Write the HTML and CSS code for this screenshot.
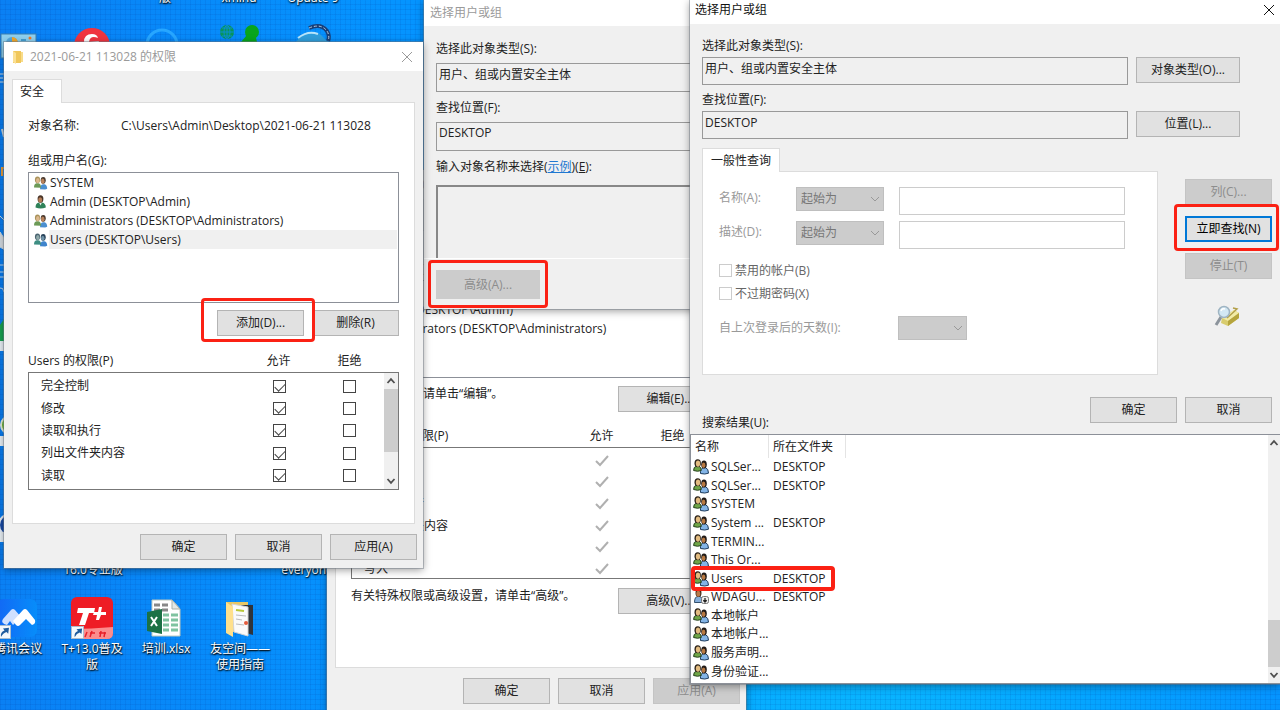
FILE: index.html
```
<!DOCTYPE html>
<html lang="zh-CN">
<head>
<meta charset="utf-8">
<title>选择用户或组</title>
<link rel="stylesheet" href="styles.css">
</head>
<body>
<svg class="defs" width="0" height="0" aria-hidden="true">
  <defs>
    <symbol id="group" viewBox="0 0 14 14">
      <path d="M6.500 13.200q0-4.500 3-5h1.500q2.600.8 2.700 4.500l-2 .8z" fill="#4b8fd0"/>
      <ellipse cx="9.700" cy="4.300" rx="2.500" ry="3.400" fill="#47372c"/>
      <ellipse cx="9.300" cy="5.200" rx="1.800" ry="2.600" fill="#b9835c"/>
      <path d="M.5 11.500q0-3.800 2.500-4.300h2q2.600.6 2.600 4.600z" fill="#6c9a57"/>
      <ellipse cx="4" cy="3.800" rx="2.600" ry="3.400" fill="#a9925a"/>
      <ellipse cx="4.300" cy="4.600" rx="1.800" ry="2.600" fill="#dcb98f"/>
    </symbol>
    <symbol id="users" viewBox="0 0 14 14">
      <path d="M6.500 13.200q0-4.500 3-5h1.500q2.600.8 2.700 4.500l-2 .8z" fill="#3f84cc"/>
      <ellipse cx="9.700" cy="4.300" rx="2.500" ry="3.400" fill="#28435a"/>
      <ellipse cx="9.300" cy="5.200" rx="1.700" ry="2.500" fill="#7093a8"/>
      <path d="M.5 11.500q0-3.800 2.500-4.300h2q2.600.6 2.600 4.600z" fill="#3e8e83"/>
      <ellipse cx="4" cy="3.800" rx="2.600" ry="3.400" fill="#4b6571"/>
      <ellipse cx="4.300" cy="4.600" rx="1.700" ry="2.500" fill="#8fa9a9"/>
    </symbol>
    <symbol id="person" viewBox="0 0 14 14">
      <path d="M2 12.500q0-4.500 3.500-5h3q3.800.8 3.800 5-5 1.800-10.300 0z" fill="#2f8259"/>
      <path d="M5.500 7.500l1.500 3 1.500-3z" fill="#e8eee9"/>
      <ellipse cx="7" cy="4" rx="2.900" ry="3.700" fill="#4a3529"/>
      <ellipse cx="6.700" cy="4.900" rx="2" ry="2.700" fill="#b77e58"/>
    </symbol>
    <symbol id="people" viewBox="0 0 16 16">
      <path d="M7.500 14.500q-.5-5 3-5.800h2q3 1 3 5.500-3.500 1.500-8 .3z" fill="#83b4e6" stroke="#1f3d5e"/>
      <ellipse cx="11" cy="5.500" rx="2.800" ry="4" fill="#201a17"/>
      <ellipse cx="10.600" cy="6.300" rx="1.800" ry="2.800" fill="#b87942"/>
      <path d="M.6 11.500q0-3.800 2.800-4.300h2.500q2.500.8 2.300 4.300-3.500 1.500-7.600 0z" fill="#6fa547" stroke="#24401d"/>
      <ellipse cx="4.700" cy="4.200" rx="3.200" ry="4" fill="#2b2218"/>
      <ellipse cx="5" cy="4.600" rx="2.200" ry="3.100" fill="#e2bb80"/>
    </symbol>
    <symbol id="account" viewBox="0 0 16 16">
      <path d="M1.500 13.500q0-6 3.500-6h2q3.500 1 3 6z" fill="#86aedb" stroke="#34516f"/>
      <ellipse cx="5.500" cy="4" rx="3" ry="3.900" fill="#3b281b"/>
      <ellipse cx="5.300" cy="4.800" rx="2" ry="3" fill="#b97a4b"/>
      <rect x="8.500" y="7.500" width="7" height="7" rx="2" fill="#eee" stroke="#777"/>
      <path d="M12 9v4M10.300 11.300L12 13l1.700-1.700" fill="none" stroke="#222" stroke-width="1.300"/>
    </symbol>
    <symbol id="up" viewBox="0 0 10 10"><path d="M1.500 7L5 3.200 8.500 7" fill="none" stroke="#505050" stroke-width="1.800"/></symbol>
    <symbol id="down" viewBox="0 0 10 10"><path d="M1.500 3L5 6.800 8.500 3" fill="none" stroke="#505050" stroke-width="1.800"/></symbol>
    <symbol id="close" viewBox="0 0 12 12"><path d="M1 1l10 10M11 1L1 11" fill="none" stroke="currentColor"/></symbol>
    <symbol id="shortcut" viewBox="0 0 14 14">
      <rect x=".5" y=".5" width="13" height="13" fill="#f4f8fc" stroke="#a8bccd"/>
      <path d="M4 12q-1-5 3.500-6.500L6 3.500l6-.8-.8 6-1.700-1.700Q6 8 4 12z" fill="#1f5c9e"/>
    </symbol>
  </defs>
</svg>

<main class="desktop">
  <svg class="backdrop-icons" width="423" height="570" aria-hidden="true">
    <rect x="1" y="34" width="35" height="24" fill="#8fd0ee" stroke="#3c7fae"/>
    <circle cx="12" cy="43" r="6" fill="#58a9dc"/><path d="M12 43v-6a6 6 0 0 1 6 6z" fill="#f3a92b"/>
    <circle cx="30" cy="38" r="1.500" fill="#f07b27"/><path d="M21 40h5" stroke="#459fd2" stroke-width="2"/>
    <circle cx="92" cy="46" r="18" fill="#f03440"/>
    <path d="M84 42q0-8 8-8 5 0 6 4-8-3-9 4l10-1q-1 4-6 4h-9z" fill="#fff"/>
    <circle cx="162" cy="45" r="15" fill="none" stroke="#27a6ff" stroke-width="3"/>
    <circle cx="227" cy="32" r="7" fill="#07955b"/>
    <g fill="none" stroke="#0a8fd0" stroke-width="1"><ellipse cx="227" cy="32" rx="3" ry="6.500"/><path d="M220 32h14M222 28h10M222 36h10M227 25v14"/></g>
    <circle cx="252" cy="32" r="7" fill="#08a51c"/><path d="M247 35l-6 7h16l-2-8z" fill="#08a51c"/>
    <path d="M296 42q8-12 24-8l8 8z" fill="#2f9edb"/><path d="M298 38q10-8 20-4" fill="none" stroke="#b6e4fa" stroke-width="2"/>
    <path d="M309 28q12-5 18 3 3 5 1 10" fill="none" stroke="#183f78" stroke-width="4"/><path d="M309 28q12-5 18 3 3 5 1 10" fill="none" stroke="#b7cce0" stroke-width="1" stroke-dasharray="3 2"/>
    <path d="M0 74h4M0 78h3M0 82h4" stroke="#c9d5df" fill="none"/>
    <path d="M2 129l2 8" stroke="#c9d5df" stroke-width="2" fill="none"/>
    <path d="M0 216l4 4M0 232l4 6 1 12-5-3z" stroke="#c9d5df" fill="#d8dde2"/>
    <path d="M2 176v-8h2" stroke="#e49b3c" stroke-width="2" fill="none"/>
    <path d="M0 265h4M0 272h4M0 277h4M0 288q3-1 4 4" stroke="#b8d4ef" fill="none"/>
    <path d="M0 325l4-6v22H0z" fill="#17a251"/><path d="M0 341h4v10H0z" fill="#eaf1f7"/>
    <circle cx="10" cy="425" r="9" fill="#69b92d" stroke="#e4eddf" stroke-width="2"/><path d="M0 436h4v10H0z" fill="#eaf1f7"/>
    <circle cx="10" cy="525" r="11" fill="#174aa6" stroke="#e5edf8" stroke-width="2"/><path d="M0 532h4v10H0z" fill="#eaf1f7"/>
  </svg>
  <span class="caption cap-a">版</span>
  <span class="caption cap-b">xmind</span>
  <span class="caption cap-c">Update 9</span>
  <span class="caption cap-d">16.0专业版</span>
  <span class="caption cap-e">everyone</span>

  <div class="shortcuts">
    <a class="shortcut" href="#meeting">
      <svg width="42" height="42" viewBox="0 0 42 42"><defs><linearGradient id="mt" x2="1"><stop stop-color="#1268f5"/><stop offset="1" stop-color="#078dfa"/></linearGradient></defs><rect x="0" y="2" width="40" height="38" rx="7" fill="url(#mt)"/><path d="M6 22l8-9q2-2 4 0l6 7-8 8-3-4-3 4q-7-2-4-6z" fill="#cfe0ff"/><path d="M16 24l10-11q2-2 4 0l8 10q1 4-3 5l-6-6-6 6q-2 2-4 0z" fill="#fff"/><use href="#shortcut" x="0" y="28" width="14" height="14"/></svg>
      <span>腾讯会议</span>
    </a>
    <a class="shortcut" href="#tplus">
      <svg width="42" height="42" viewBox="0 0 42 42"><rect width="42" height="42" rx="6" fill="#ee1c25"/><path d="M0 32q20 0 42-2v6q0 6-6 6H0z" fill="#fb8d8d"/><path d="M7 11h17l-1 5h-5l-4 12H8l4-12H6z" fill="#fff"/><path d="M28 10h3l-1 5h5v3h-5l-2 5h-3l1-5h-4l1-3h4z" fill="#fff"/><path d="M16 35l-2 5M19 36h5M21 34l-2 6M28 36h7M30 34l-1 6M34 35l-1 5" stroke="#e8202a" stroke-width="1.500"/><use href="#shortcut" x="0" y="29" width="13" height="13"/></svg>
      <span>T+13.0普及版</span>
    </a>
    <a class="shortcut" href="#training">
      <svg width="42" height="42" viewBox="0 0 42 42"><path d="M7 3h20l8 9v27H7z" fill="#fff" stroke="#bcc9c0"/><path d="M27 3v9h8z" fill="#e3e8e4" stroke="#a6b1a9"/><path d="M9 8h6M17 8h6M9 13h6M17 13h6" stroke="#888" stroke-width="3"/><path d="M18 18h6M26 18h7M18 23h6M26 23h7M18 28h6M26 28h7M18 33h6M26 33h7" stroke="#7fc3a0" stroke-width="3"/><path d="M2 15l15-3v25L2 34z" fill="#1c7145"/><path d="M6 20l6 9M12 20l-6 9" stroke="#fff" stroke-width="2"/></svg>
      <span>培训.xlsx</span>
    </a>
    <a class="shortcut" href="#guide">
      <svg width="42" height="42" viewBox="0 0 42 42"><path d="M7 5h22v30H7z" fill="#e9c765"/><path d="M22 8h12v30l-10-3z" fill="#30343a"/><path d="M13 7l16 3v29l-14-4z" fill="#fafafa" stroke="#d4d4d4"/><path d="M17 13l8 1" stroke="#b9c738" stroke-width="2"/><path d="M17 18l10 1M17 22l6 1M17 27l8 1" stroke="#bbb"/><circle cx="27" cy="26" r="2" fill="#e35b3c"/><path d="M7 5l7 5v30l-7-4z" fill="#ffe08c"/></svg>
      <span>友空间——使用指南</span>
    </a>
  </div>

  <section class="window props" aria-label="属性">
    <header class="title inactive"><span>2021-06-21 113028 属性</span></header>
    <div class="sheet">
      <div class="tabs"><button class="tab" type="button">安全</button></div>
      <div class="panel">
        <p class="object"><span>对象名称:</span><span>C:\Users\Admin\Desktop</span></p>
        <p class="group-label">组或用户名(G):</p>
        <ul class="principals">
          <li><svg><use href="#group"/></svg><span>SYSTEM</span></li>
          <li><svg><use href="#person"/></svg><span>Admin (DESKTOP\Admin)</span></li>
          <li><svg><use href="#group"/></svg><span>Administrators (DESKTOP\Administrators)</span></li>
        </ul>
        <div class="hint edit"><span>要更改权限，请单击“编辑”。</span><button class="btn big" type="button">编辑(E)...</button></div>
        <div class="perm-head"><span>SYSTEM 的权限(P)</span><span>允许</span><span>拒绝</span></div>
        <div class="perm-box tall">
          <table class="perms">
            <tr><td>完全控制</td><td><svg class="tick" viewBox="0 0 14 12"><path d="M1 6l4 4 8-9"/></svg></td><td></td></tr>
            <tr><td>修改</td><td><svg class="tick" viewBox="0 0 14 12"><path d="M1 6l4 4 8-9"/></svg></td><td></td></tr>
            <tr><td>读取和执行</td><td><svg class="tick" viewBox="0 0 14 12"><path d="M1 6l4 4 8-9"/></svg></td><td></td></tr>
            <tr><td>列出文件夹内容</td><td><svg class="tick" viewBox="0 0 14 12"><path d="M1 6l4 4 8-9"/></svg></td><td></td></tr>
            <tr><td>读取</td><td><svg class="tick" viewBox="0 0 14 12"><path d="M1 6l4 4 8-9"/></svg></td><td></td></tr>
            <tr><td>写入</td><td><svg class="tick" viewBox="0 0 14 12"><path d="M1 6l4 4 8-9"/></svg></td><td></td></tr>
          </table>
        </div>
        <div class="hint advanced"><span>有关特殊权限或高级设置，请单击“高级”。</span><button class="btn big" type="button">高级(V)...</button></div>
      </div>
      <footer class="actions"><button class="btn" type="button">确定</button><button class="btn" type="button">取消</button><button class="btn" type="button" disabled>应用(A)</button></footer>
    </div>
  </section>

  <section class="window picker" aria-label="选择用户或组">
    <header class="title inactive"><span>选择用户或组</span></header>
    <div class="picker-body">
      <label for="p-type">选择此对象类型(S):</label>
      <input id="p-type" class="readout" readonly value="用户、组或内置安全主体">
      <label for="p-loc">查找位置(F):</label>
      <input id="p-loc" class="readout" readonly value="DESKTOP">
      <label for="p-names">输入对象名称来选择(<a href="#examples">示例</a>)(<u>E</u>):</label>
      <textarea id="p-names" class="names" readonly></textarea>
      <div class="picker-foot"><button class="btn marked" type="button" disabled>高级(A)...</button></div>
    </div>
  </section>

  <section class="window perm" aria-label="权限">
    <header class="title inactive">
      <svg class="folder" viewBox="0 0 10 14"><path d="M0 1h8v12H0z" fill="#f0c75c"/><path d="M0 1l3 2v11l-3-2z" fill="#fbe094"/><path d="M8 2h2v10H8z" fill="#f8dc8a"/></svg>
      <span>2021-06-21 113028 的权限</span>
      <button class="close" type="button" aria-label="关闭"><svg><use href="#close"/></svg></button>
    </header>
    <div class="sheet">
      <div class="tabs"><button class="tab" type="button">安全</button></div>
      <div class="panel">
        <p class="object"><span>对象名称:</span><span>C:\Users\Admin\Desktop\2021-06-21 113028</span></p>
        <p class="group-label">组或用户名(G):</p>
        <ul class="principals">
          <li><svg><use href="#group"/></svg><span>SYSTEM</span></li>
          <li><svg><use href="#person"/></svg><span>Admin (DESKTOP\Admin)</span></li>
          <li><svg><use href="#group"/></svg><span>Administrators (DESKTOP\Administrators)</span></li>
          <li class="selected"><svg><use href="#users"/></svg><span>Users (DESKTOP\Users)</span></li>
        </ul>
        <div class="edit-row"><button class="btn marked" type="button">添加(D)...</button><button class="btn" type="button">删除(R)</button></div>
        <div class="perm-head"><span>Users 的权限(P)</span><span>允许</span><span>拒绝</span></div>
        <div class="perm-box">
          <table class="perms">
            <tr><td>完全控制</td><td><input type="checkbox" checked aria-label="允许完全控制"></td><td><input type="checkbox" aria-label="拒绝完全控制"></td></tr>
            <tr><td>修改</td><td><input type="checkbox" checked aria-label="允许修改"></td><td><input type="checkbox" aria-label="拒绝修改"></td></tr>
            <tr><td>读取和执行</td><td><input type="checkbox" checked aria-label="允许读取和执行"></td><td><input type="checkbox" aria-label="拒绝读取和执行"></td></tr>
            <tr><td>列出文件夹内容</td><td><input type="checkbox" checked aria-label="允许列出文件夹内容"></td><td><input type="checkbox" aria-label="拒绝列出文件夹内容"></td></tr>
            <tr><td>读取</td><td><input type="checkbox" checked aria-label="允许读取"></td><td><input type="checkbox" aria-label="拒绝读取"></td></tr>
            <tr><td></td><td><input type="checkbox" aria-label="允许写入"></td><td><input type="checkbox" aria-label="拒绝写入"></td></tr>
          </table>
          <div class="scroll"><svg><use href="#up"/></svg><i class="thumb top"></i><svg><use href="#down"/></svg></div>
        </div>
      </div>
      <footer class="actions"><button class="btn" type="button">确定</button><button class="btn" type="button">取消</button><button class="btn" type="button">应用(A)</button></footer>
    </div>
  </section>

  <section class="window search" aria-label="选择用户或组">
    <header class="title"><span>选择用户或组</span><button class="close" type="button" aria-label="关闭"><svg><use href="#close"/></svg></button></header>
    <div class="search-body">
      <label for="s-type">选择此对象类型(S):</label>
      <div class="field-row"><input id="s-type" class="readout" readonly value="用户、组或内置安全主体"><button class="btn big" type="button">对象类型(O)...</button></div>
      <label for="s-loc">查找位置(F):</label>
      <div class="field-row"><input id="s-loc" class="readout" readonly value="DESKTOP"><button class="btn big" type="button">位置(L)...</button></div>
      <div class="query-row">
        <div class="query">
          <div class="tabs"><button class="tab" type="button">一般性查询</button></div>
          <div class="panel">
            <div class="criteria"><label for="q-name">名称(A):</label><select aria-label="名称条件" disabled><option>起始为</option></select><input id="q-name" type="text" disabled></div>
            <div class="criteria"><label for="q-desc">描述(D):</label><select aria-label="描述条件" disabled><option>起始为</option></select><input id="q-desc" type="text" disabled></div>
            <label class="check"><input type="checkbox" disabled>禁用的帐户(B)</label>
            <label class="check"><input type="checkbox" disabled>不过期密码(X)</label>
            <div class="days"><label for="q-days">自上次登录后的天数(I):</label><select id="q-days" disabled><option></option></select></div>
          </div>
        </div>
        <div class="commands">
          <button class="btn" type="button" disabled>列(C)...</button>
          <button class="btn default marked" type="button">立即查找(N)</button>
          <button class="btn" type="button" disabled>停止(T)</button>
          <svg class="finder" viewBox="0 0 26 22"><path d="M8 13L20 5l5 3v5l-11 8-7-3z" fill="#d8cc6e"/><path d="M8 13l6 3 11-8-5-3z" fill="#f2eba6"/><path d="M14 16v5l11-8V8z" fill="#b5a43d"/><path d="M19 3l4 1-10 9" fill="none" stroke="#b3a04a" stroke-width="1.500"/><path d="M7 12l-5 8" stroke="#8c949c" stroke-width="3"/><circle cx="10" cy="7" r="5.500" fill="#d3e8f4" stroke="#9fb4c2" stroke-width="1.500"/><path d="M7 6q1-3 4-2" stroke="#fff" fill="none" stroke-width="1.500"/></svg>
        </div>
      </div>
      <div class="search-actions"><button class="btn" type="button">确定</button><button class="btn" type="button">取消</button></div>
      <p class="results-label">搜索结果(U):</p>
    </div>
    <div class="results">
      <table class="hits">
        <thead><tr><th>名称</th><th>所在文件夹</th></tr></thead>
        <tbody>
          <tr><td><svg><use href="#people"/></svg>SQLSer...</td><td>DESKTOP</td></tr>
          <tr><td><svg><use href="#people"/></svg>SQLSer...</td><td>DESKTOP</td></tr>
          <tr><td><svg><use href="#people"/></svg>SYSTEM</td><td></td></tr>
          <tr><td><svg><use href="#people"/></svg>System ...</td><td>DESKTOP</td></tr>
          <tr><td><svg><use href="#people"/></svg>TERMIN...</td><td></td></tr>
          <tr><td><svg><use href="#people"/></svg>This Or...</td><td></td></tr>
          <tr><td class="hit"><svg><use href="#people"/></svg>Users</td><td>DESKTOP</td></tr>
          <tr><td><svg><use href="#account"/></svg>WDAGU...</td><td>DESKTOP</td></tr>
          <tr><td><svg><use href="#people"/></svg>本地帐户</td><td></td></tr>
          <tr><td><svg><use href="#people"/></svg>本地帐户...</td><td></td></tr>
          <tr><td><svg><use href="#people"/></svg>服务声明...</td><td></td></tr>
          <tr><td><svg><use href="#people"/></svg>身份验证...</td><td></td></tr>
        </tbody>
      </table>
      <div class="scroll"><svg><use href="#up"/></svg><i class="thumb bottom"></i><svg><use href="#down"/></svg></div>
    </div>
  </section>
</main>
</body>
</html>
```
FILE: styles.css
```
* { box-sizing: border-box; }
html, body { height: 100%; }
body {
  margin: 0;
  font: 12px/16px "Open Sans", "Noto Sans CJK SC", sans-serif;
  color: #222;
}
button, input, select, textarea { font: inherit; color: inherit; margin: 0; }
p, ul { margin: 0; padding: 0; list-style: none; }
table { border-collapse: collapse; border-spacing: 0; }
td, th { padding: 0; font-weight: normal; text-align: left; }
svg { display: block; flex: none; }
.defs { position: absolute; }

/* Desktop */
.desktop {
  position: relative;
  height: 100%;
  overflow: hidden;
  background:
    repeating-linear-gradient(0deg, rgba(0, 50, 150, .1) 0 1px, transparent 1px 5px),
    repeating-linear-gradient(90deg, rgba(0, 50, 150, .1) 0 1px, transparent 1px 5px),
    radial-gradient(circle at 68% 106%, #0ab8ff 0, #04a6ff 18%, transparent 36%),
    linear-gradient(90deg, #0a80f4, #0594ff 30%, #0594ff);
}
.backdrop-icons { position: absolute; left: 0; top: 0; }
.caption, .shortcut {
  color: #fff;
  text-align: center;
  text-shadow: 0 1px 2px #000, 1px 1px 1px rgba(0, 0, 0, .7);
}
.caption { position: absolute; width: 74px; }
.cap-a { left: 128px; top: -10px; }
.cap-b { left: 202px; top: -10px; }
.cap-c { left: 276px; top: -10px; }
.cap-d { left: 56px; top: 562px; }
.cap-e { left: 270px; top: 562px; }
.shortcuts { position: absolute; left: -19px; bottom: 37px; display: flex; }
.shortcut {
  display: flex;
  flex-direction: column;
  align-items: center;
  gap: 2px;
  width: 74px;
  height: 76px;
  padding: 0 4px;
  text-decoration: none;
}

/* Windows */
.window {
  position: absolute;
  display: flex;
  flex-direction: column;
  background: #f0f0f0;
  box-shadow: 0 0 0 1px rgba(110, 120, 130, .45), 0 2px 8px rgba(0, 0, 0, .4);
}
.title {
  display: flex;
  align-items: center;
  gap: 7px;
  height: 29px;
  padding: 0 10px 0 9px;
  background: #fff;
  color: #111;
}
.title.inactive { color: #9a9a9a; }
.close { margin-left: auto; padding: 0; border: 0; background: none; }
.close svg { width: 12px; height: 12px; }
.folder { width: 10px; height: 14px; }
.btn {
  flex: none;
  width: 87px;
  height: 26px;
  padding: 0;
  border: 1px solid #b4b4b4;
  background: #e1e1e1;
  color: #222;
}
.btn:disabled { border-color: #c4c4c4; background: #ccc; color: #8d8d8d; }
.btn.default { border: 2px solid #0078d7; color: #000; }
.btn.big { width: 104px; }
.marked { position: relative; }
.marked::after {
  content: "";
  position: absolute;
  inset: -13px -12px -7px -17px;
  border: 3px solid #fb2114;
  border-radius: 4px;
}
.tabs { display: flex; }
.tab {
  position: relative;
  height: 24px;
  margin-bottom: -1px;
  padding: 0 17px 0 7px;
  border: 1px solid #dcdcdc;
  border-bottom: 0;
  background: #fff;
}
.panel { border: 1px solid #dcdcdc; background: #fff; }
.readout {
  width: 100%;
  height: 28px;
  padding: 0 2px 6px;
  border: 1px solid #999;
  background: #f0f0f0;
  outline: 0;
}

/* Property sheets */
.perm, .props { width: 419px; }
.perm { left: 4px; top: 42px; }
.props { left: 327px; top: 170px; }
.sheet { padding: 8px; }
.sheet .panel { height: 422px; padding: 15px 15px 0; }
.props .sheet .panel { height: 438px; padding-top: 8px; }
.object { display: flex; }
.object span:first-child { width: 93px; }
.group-label { padding: 19px 0 3px; }
.principals { height: 131px; border: 1px solid #8c9098; padding: 0 1px 0 4px; }
.principals li { display: flex; align-items: center; gap: 1px; height: 19px; line-height: 19px; }
.principals svg { width: 15px; height: 14px; }
.principals span { flex: 1; padding-left: 1px; }
.principals .selected span { background: #f0f0f0; }
.edit-row { display: flex; justify-content: flex-end; gap: 8px; padding-top: 7px; }
.perm-head { display: flex; padding: 17px 0 3px; }
.perm-head span { width: 71px; text-align: center; }
.perm-head span:first-child { width: 215px; text-align: left; }
.perm-box { display: flex; height: 118px; border: 1px solid #777; overflow: hidden; }
.perms { width: 355px; height: 130px; table-layout: fixed; align-self: flex-start; margin-top: 2px; }
.perms td:first-child { width: 215px; padding-left: 12px; }
.perms td:nth-child(n+2) { width: 70px; text-align: center; }
.perms input, .check input {
  appearance: none;
  display: block;
  width: 13px;
  height: 13px;
  margin: 0 auto;
  border: 1px solid #444;
  background: #fff;
}
.perms input:checked::before {
  content: "";
  display: block;
  width: 9px;
  height: 5px;
  margin: 2px 0 0 1px;
  border: solid #444;
  border-width: 0 0 1px 1px;
  transform: rotate(-45deg);
}
.tick { width: 14px; height: 12px; margin: 0 auto; fill: none; stroke: #b0b0b0; stroke-width: 2; }
.scroll {
  display: flex;
  flex-direction: column;
  align-items: center;
  width: 15px;
  margin-left: auto;
  background: #f0f0f0;
}
.scroll svg { width: 10px; height: 16px; }
.thumb { width: 100%; background: #cdcdcd; }
.thumb.top { height: 63px; margin-bottom: auto; }
.thumb.bottom { height: 47px; margin-top: auto; }
.actions { display: flex; justify-content: flex-end; gap: 8px; padding-top: 10px; margin-right: -2px; }

.props .object { height: 16px; }
.props .group-label { padding: 6px 0 3px; }
.props .principals { height: 98px; }
.hint { display: flex; justify-content: space-between; }
.hint.edit { padding-top: 8px; }
.hint.advanced { padding-top: 9px; }
.props .perm-head { padding: 16px 0 3px; }
.perm-box.tall { height: 132px; }

/* Object picker */
.picker { left: 424px; top: 0; width: 460px; }
.picker .title { height: 26px; padding: 0 6px; }
.picker-body { display: flex; flex-direction: column; padding: 15px 12px 0; }
.picker-body .readout { height: 29px; margin: 6px 0 8px; padding-bottom: 8px; }
.picker-body a { color: #1f78d1; }
.names {
  height: 73px;
  margin-top: 10px;
  border: 2px solid #888;
  border-width: 2px 0 0 2px;
  background: #f0f0f0;
  resize: none;
  outline: 0;
}
.picker-foot { margin: 0 -12px; padding: 11px 12px 10px; border-top: 1px solid #fff; }
.picker-foot .btn { width: 104px; height: 29px; border: 0; }
.picker-foot .marked::after { inset: -10px -8px -9px; }

/* Search dialog */
.search { left: 690px; right: 0; top: 0; }
.search .title { height: 24px; padding: 0 5px 4px; }
.search-body { display: flex; flex-direction: column; padding: 14px 8px 3px 12px; }
.field-row { display: flex; gap: 8px; padding: 3px 32px 7px 0; }
.field-row .readout { flex: 1; min-width: 0; }
.query-row { display: flex; gap: 27px; padding-top: 2px; }
.query { flex: 1; min-width: 0; }
.query .tab { padding: 0 8px; }
.query .panel { height: 204px; padding: 15px 32px 0 16px; color: #999; }
.criteria { display: flex; align-items: flex-start; gap: 15px; height: 34px; }
.criteria label { width: 62px; padding-top: 3px; }
.criteria input {
  flex: 1;
  min-width: 0;
  height: 28px;
  border: 1px solid #ccc;
  background: #fff;
}
select {
  appearance: none;
  width: 88px;
  height: 24px;
  padding: 0 4px;
  border: 1px solid #bfbfbf;
  border-radius: 0;
  color: #777;
  opacity: 1;
  background:
    linear-gradient(-45deg, transparent 45%, #999 45% 58%, transparent 58%) right 4px center / 4px 4px no-repeat,
    linear-gradient(45deg, transparent 45%, #999 45% 58%, transparent 58%) right 8px center / 4px 4px no-repeat,
    #ccc;
}
.check { display: flex; align-items: center; gap: 3px; height: 23px; color: #666; }
.check input { margin: 0; border-color: #ccc; }
.criteria + .check { margin-top: 4px; }
.days { display: flex; gap: 57px; align-items: center; padding-top: 11px; }
.days select { width: 69px; }
.commands { display: flex; flex-direction: column; gap: 11px; padding-top: 31px; }
.commands .marked::after { inset: -14px -9px -11px -13px; }
.finder { width: 26px; height: 22px; margin: 15px auto 0 29px; }
.search-actions { display: flex; justify-content: flex-end; gap: 8px; padding-top: 22px; }
.results-label { margin-top: -8px; }
.results { display: flex; height: 250px; border: 1px solid #8c9098; border-right: 0; background: #fff; }
.hits { width: 155px; height: 246px; table-layout: fixed; border-collapse: separate; }
.hits th { height: 23px; padding-left: 4px; border-right: 1px solid #e4e4e4; white-space: nowrap; }
.hits th:first-child { width: 78px; }
.hits td { padding-left: 4px; white-space: nowrap; }
.hits td:first-child { padding-left: 2px; }
.hits td svg { float: left; width: 16px; height: 16px; margin-right: 2px; }
.hit { position: relative; }
.hit::after {
  content: "";
  position: absolute;
  inset: -3px -66px -3px 0;
  border: 4px solid #fb2114;
  border-radius: 4px;
}
.results .scroll { width: 12px; }
```
